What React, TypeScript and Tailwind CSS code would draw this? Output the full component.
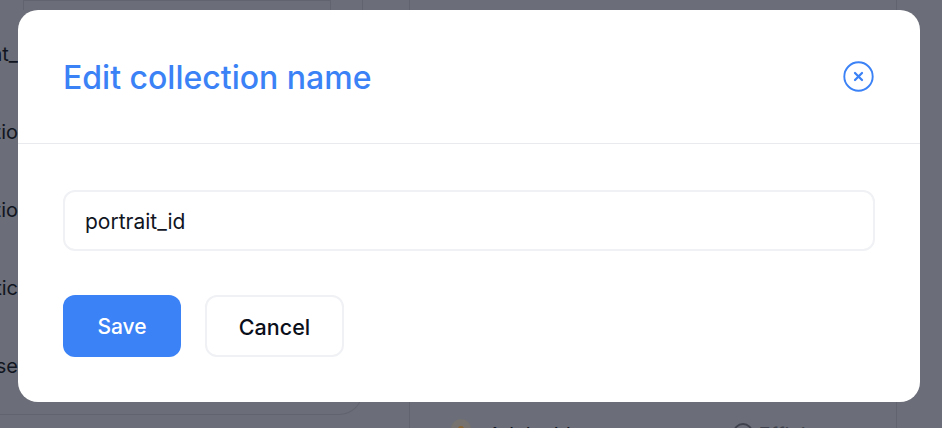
const HIDDEN_ROWS = ["account_", "portio", "relatio", "collectic", "close"];

function PageBehind() {
  return (
    <div className="flex h-full text-[20px] leading-[24px] text-[#11151f]">
      {/* left column, mostly hidden by the dialog */}
      <div className="w-[410px] shrink-0 border-r border-[#61646e]">
        <div className="relative h-[415px] w-[363px] rounded-br-[24px] border-r border-b border-[#61646e]">
          <div className="ml-[23px] h-[10px] w-[308px] border-x border-t border-[#61646e]" />
          <div className="mt-[32px] flex w-[18px] flex-col items-end gap-[54px]">
            {HIDDEN_ROWS.map((row) => (
              <span key={row} className="whitespace-nowrap">
                {row}
              </span>
            ))}
          </div>
        </div>
      </div>
      {/* right column */}
      <div className="mr-[45px] flex flex-1 items-start border-r border-[#61646e] pt-[415px]">
        <div className="ml-[41px] mt-[4px] flex h-[20px] w-[20px] shrink-0 justify-center rounded-full bg-[#75726f] pt-[7px]">
          <div className="h-[6px] w-[6px] rounded-full bg-[#8a6430]" />
        </div>
        <span className="ml-[17px] mt-[8px] whitespace-nowrap">Adult side</span>
        <div className="ml-[151px] mt-[8px] h-[20px] w-[20px] shrink-0 rounded-full border-2 border-[#3f424c]" />
        <span className="ml-[5px] mt-[8px] whitespace-nowrap text-[#3f424c]">Efficient</span>
      </div>
    </div>
  );
}

export default function App() {
  return (
    <div className="relative h-[428px] w-[942px] overflow-hidden bg-[#6b6e78] font-['Inter',sans-serif]">
      <PageBehind />

      <div className="absolute left-[18px] top-[10px] flex h-[392px] w-[902px] flex-col rounded-[20px] bg-white">
        <div className="flex h-[134px] shrink-0 items-center justify-between border-b border-[#e9eaee] pl-[45px] pr-[46px]">
          <h2 className="pt-[2px] text-[32px] font-medium leading-[36px] text-[#3b82f6]">Edit collection name</h2>
          <button aria-label="Close" className="text-[#3b82f6]">
            <svg width="31" height="31" viewBox="0 0 31 31" fill="none" stroke="currentColor" className="block">
              <circle cx="15.5" cy="15.5" r="14.2" strokeWidth="1.9" />
              <path d="M12 12l7 7M19 12l-7 7" strokeWidth="2.3" strokeLinecap="round" />
            </svg>
          </button>
        </div>

        <div className="flex flex-col gap-[44px] pl-[45px] pr-[45px] pt-[46px]">
          <div className="flex h-[61px] items-center rounded-[12px] border-2 border-[#f0f1f4] pl-[20px] pt-[2px] text-[21px] text-[#11151f]">
            portrait_id
          </div>
          <div className="flex gap-[24px]">
            <button className="h-[62px] w-[118px] rounded-[12px] bg-[#3b82f6] pt-[2px] text-[21px] font-[450] text-white">
              Save
            </button>
            <button className="h-[62px] w-[139px] rounded-[12px] border-2 border-[#f0f1f4] bg-white pt-[2px] text-[21.5px] font-[450] text-[#0b0f1a]">
              Cancel
            </button>
          </div>
        </div>
      </div>
    </div>
  );
}
